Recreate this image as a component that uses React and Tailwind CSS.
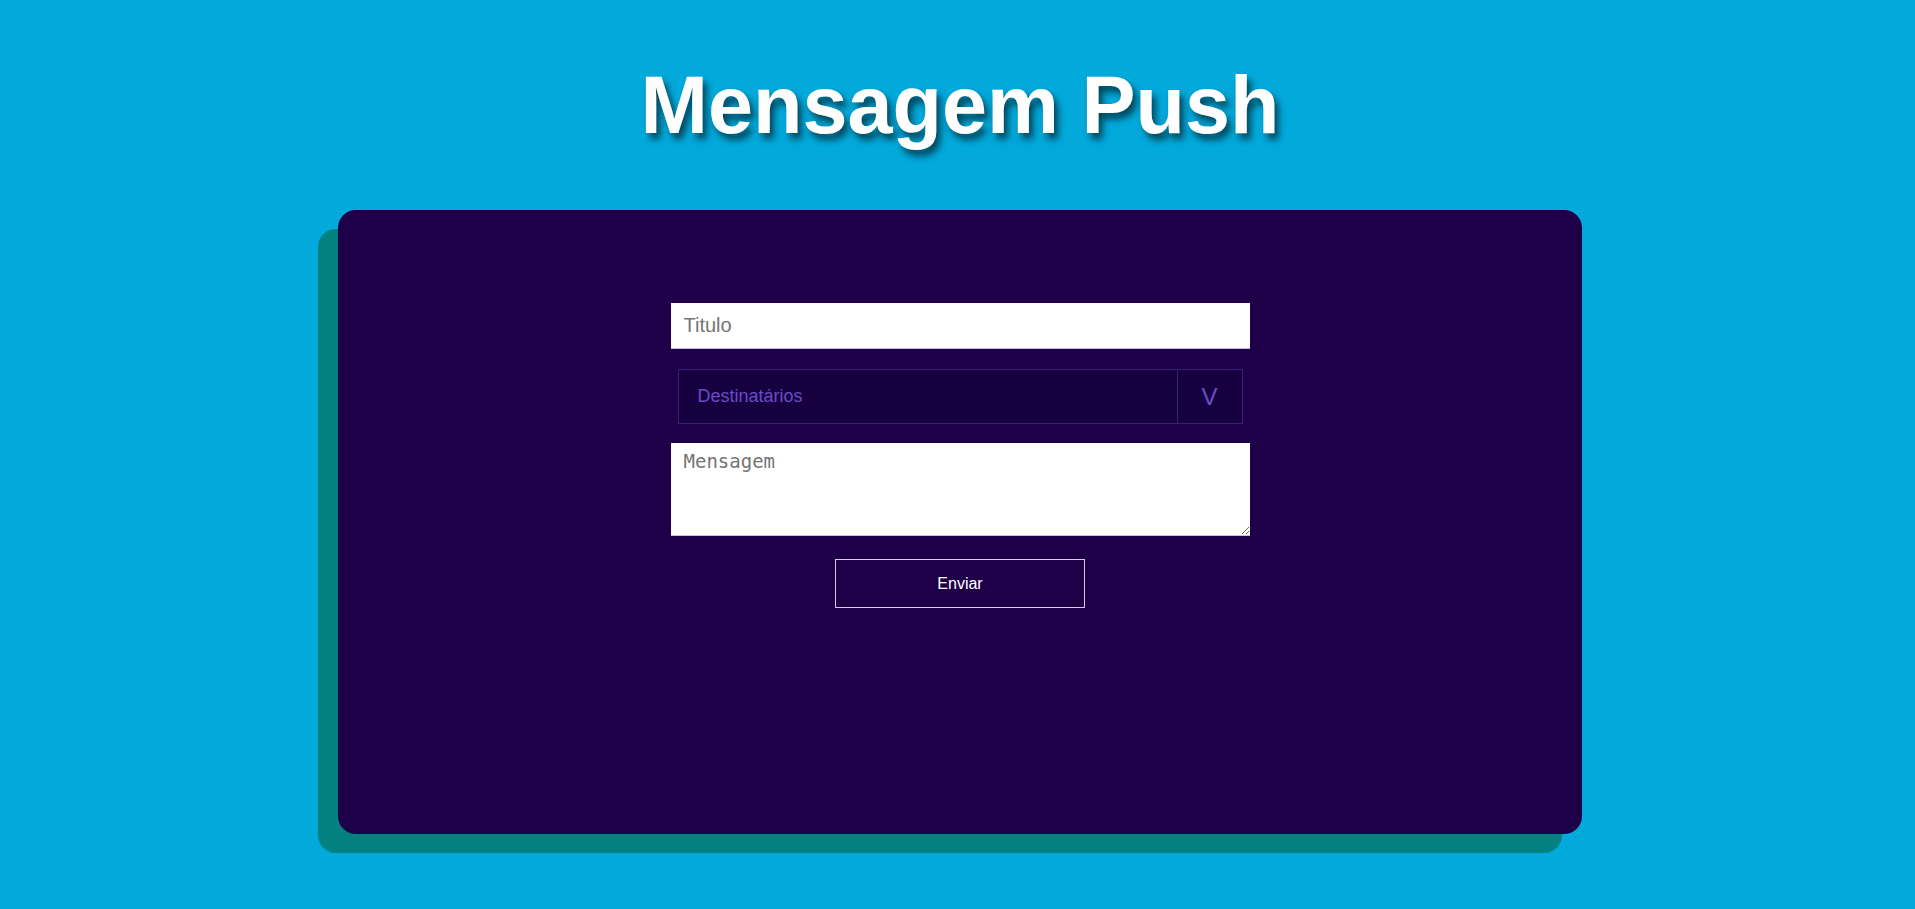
import React, { useState } from "react";

const App = () => {
    const [titulo, setTitulo] = useState("");
    const [mensagem, setMensagem] = useState("");

    return (
        <div className="min-h-screen bg-[#02a9db] pl-[5px] pt-[65px] pb-[60px] font-['Liberation_Sans',Arial,sans-serif]">
            <h1 className="text-center text-[81px] leading-none font-bold text-white [text-shadow:4px_6px_7px_rgba(0,0,0,0.6)]">
                Mensagem Push
            </h1>

            <div className="mx-auto mt-[64px] w-[1244px] h-[624px] rounded-[18px] bg-[#1e0049] shadow-[-20px_19px_0_#038181] pt-[93px]">
                <form className="mx-auto w-[579px] flex flex-col items-center" onSubmit={e => e.preventDefault()}>
                    <input
                        type="text"
                        value={titulo}
                        onChange={e => setTitulo(e.target.value)}
                        placeholder="Titulo"
                        className="w-full h-[46px] bg-white px-[13px] text-[20px] text-black placeholder:text-[#757575] border-b border-[#cbbbe9] outline-none"
                    />

                    <div className="mt-[20px] w-[565px] h-[55px] flex bg-[#170040] border border-[#36207a]">
                        <div className="flex-1 flex items-center pl-[19px] text-[18px] text-[#6b4bc6]">
                            Destinatários
                        </div>
                        <div className="w-[65px] flex items-center justify-center border-l border-[#36207a] text-[24px] text-[#6b4bc6]">
                            V
                        </div>
                    </div>

                    <textarea
                        value={mensagem}
                        onChange={e => setMensagem(e.target.value)}
                        placeholder="Mensagem"
                        className="mt-[19px] w-full h-[93px] bg-white px-[13px] py-[4px] text-[19px] font-['DejaVu_Sans_Mono',monospace] text-black placeholder:text-[#757575] border-b border-[#cbbbe9] outline-none"
                    />

                    <button
                        type="submit"
                        className="mt-[23px] w-[250px] h-[49px] border border-[#d6c8ef] bg-transparent text-white text-[16px]"
                    >
                        Enviar
                    </button>
                </form>
            </div>
        </div>
    );
};

export default App;
